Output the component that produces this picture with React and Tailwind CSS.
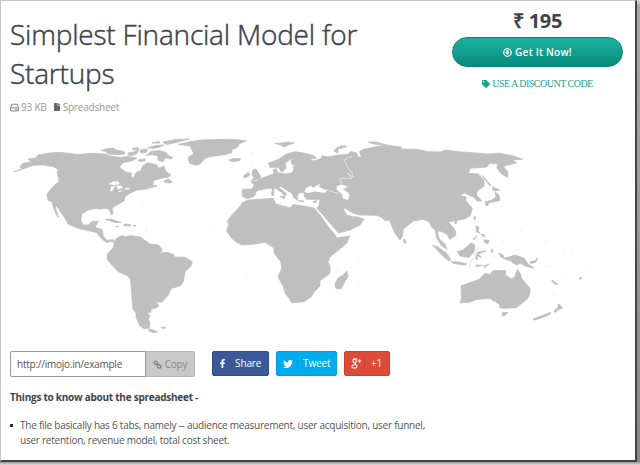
import React from "react";
import { FaFile, FaTag, FaTwitter, FaFacebookF } from "react-icons/fa";

const LAND = [
  // North America
  "M14 171.7L22 169L20 167L23 163L31 162L28 159L36 158L38 155L50 153L60 152.3L78 154.5L90 153.3L105 154L110 156L120 157.3L128 156.5L137 158.3L132 160.7L123 162.7L119.3 167.3L125 171.7L131.7 173.3L130.7 177.3L134 177.3L136 172.7L140.7 170.7L142.7 166L147.3 162.7L156.7 164.7L158.3 168.3L164 166.3L166 171.7L171 175L168 177.3L161 178.3L153 180.7L146 184L154 181.5L152 185L157 186L145 189.3L137 190L130 193.3L125 196.7L124.3 200.7L115 206L112 208.3L113.3 213.3L111.3 215L109.3 210L106.7 208.3L100 209L96 208.3L88.3 210L81.7 214L80.7 220L83.3 225L88.3 225L91.7 221.7L98.3 221L95 227.5L101.7 229.3L102.7 232L103.3 236.7L107.3 240.3L113.3 239.6L114 242L110 241.5L107 242.5L101.7 239L96.7 232.7L88.3 230.5L80 229L68.3 224.3L65 218.3L59.3 210L56.5 206L55 206.5L58.7 217.7L56 214L53.3 207L51.7 201.5L48.3 200.7L46.7 195L50 190L56 184L59 181.5L58.5 178L57 173L58.3 169.5L53.3 166.7L43.3 165L33.3 165.3L26.7 167.7Z",
  // Arctic islands
  "M101 150.5L106 149L113 148L116 150L124 151.5L125 154L118 154.5L108 154L106 151.5Z",
  "M128 153L134 152L139 149.5L137 153.5L132 155.5L128 155Z",
  "M132 148.5L138 147.5L139 149L134 150Z M140 150L148 149L146 152.5L141 153Z",
  "M148 147.5L156 145.5L164 145L160 147L153 148.5Z M163 142L176 139.5L189 139L176 142.5L166 144.5Z M152 143L159 141.5L160 143Z",
  "M146 155.5L151 151.5L160 150.5L166 152.5L169 156L173 157.5L171 159L165 157.5L163 162L158 160L158 156L152 154.5Z M138 160L145 159L145 161L139 161.5Z",
  // Newfoundland and Caribbean
  "M164 181L168 179L172 181.5L171 183L165 182.5Z M105 219.5L111 219L121 222.5L115 222.5L109 220.5Z M124 224L131 224.5L130 226L124 225.8Z M116 226L119 226.5L116 227Z M133 225.5L136 225.5L135 226.5Z",
  // Greenland, Iceland
  "M178.3 144.3L190 141.7L201 140L223.3 139.3L235 139.5L246.7 140.7L239 144L238 147L231.7 150L232 152.5L226 154.5L211 156.5L205 158.3L200 164L196 165.2L189.3 163.3L188.3 157L194 154L190 146Z M229 160L233 158.7L240.5 158.7L239 161L231 161.5Z",
  // South America
  "M114 242L117 238L123 235.3L124 237L130 235.8L140 236.7L146.7 241.7L150 244L158.3 245L161.7 248.5L161.7 251L159 255L163 252.5L168.3 252.7L174 254.7L174.5 257L185 257.3L192.3 261.7L191 266L185 271.7L183.3 281.7L180.7 285.7L171 288.5L168.3 295L161.7 302.3L155.7 301.7L159 306L155 308.5L150.7 309L151 312L147.3 312.7L150 316L148.3 319L150 323L149.3 328.3L144 328.5L140 326L136 317.3L136 313L132.7 308.3L130.7 280L128 276L118.3 271.7L112 265L107 259.3L107.5 254L113 248L114 244.5Z",
  "M149 329L153 330L157.5 332L153 332.5L149 331Z M161 327.5L166 327L164 329Z",
  // Europe and Asia
  "M242.3 189.5L252 189L254.3 185L251 181.7L257 181.3L261.7 178.3L268 176L274.3 173.5L273 170L276.5 168.5L277.5 172.7L286 174L292 172.5L294 169.5L293.3 166.5L302.3 165.7L292.3 165L291 160.7L295 158.3L291 159L285 163.3L286 168.3L281.7 172L278 167.3L270 167.3L268.3 163.3L278 159.5L286.7 154L295 151.7L305 153.3L315 156.3L316.5 158.5L309 158.5L314 161L321 158.3L322.3 155.7L328 157L338.3 155L348 154.5L350.5 151.5L356.7 153L358.3 157.3L361.7 156.7L359.3 151.7L363.3 149.3L373.3 147.3L386.7 145L401.7 147.3L400 149L416.7 149.3L428.3 151.7L440 152L445 150L461.7 152L473.3 152.7L486.7 154L500 153.3L513.3 156L522.7 159.3L511.7 160L516.7 162.7L508.3 165L503.3 166.5L507.7 171.7L507.7 177.5L501.7 174L497 168.3L497.3 163.5L490 163.3L486.7 167L470 168.3L468.3 173.3L478.3 174L484 180L484 186L477.3 191L476.5 195L481.7 200.7L477.3 201L473.3 197L468.3 195L465 192.8L459.3 195.3L466 197L466 201L472.3 208.3L470 216L464 219L455 220.7L448.3 221.7L455 230L456 235L450 239.3L446.7 234L440 231L437.3 231.7L439.3 239.3L444.5 243.5L447 249.3L441.7 246L436.7 238.3L435 229.5L431.7 227.3L429.3 222L423.3 219.3L413.3 221L403.3 229.3L402 237L400 240L395 233.3L389.3 220L385 220.7L381.7 217.3L376.7 215.3L360 215L353 213L345 208.3L343.3 209.3L346.7 215L353.3 216.7L358 217L364 219.3L360 225L350 230L338.3 233L333 226.5L316.7 208L319 206L320 199.3L306.7 199.3L304 196L304.5 192.5L299 193L297 196L297.5 200L294 198L292 193.5L281 186.5L278.5 187L286.7 194L285 196L282 192.5L274.5 188L267 188.5L257 190.5L254 196.5L247.5 198.7L242.3 196.5Z",
  // Britain, Ireland, Mediterranean islands
  "M253 170L256 169L258.5 173L261 177L259 179.5L251 180.5L254 178L252 174Z M244 175.5L248 172.5L250 174L247.5 177L243.5 177.5Z M272.5 188L274 187.5L273.5 195.5L271.5 195Z M280 196.5L285 196L284 199Z M298 200.5L304 201L303 202Z M313 201.5L317 200.5L315 203Z",
  // Russian Arctic islands
  "M275 143.5L281 143L288 142L294 143L288 145L284 147L281 145Z M334 151L337 147.5L343 146L347 146.5L338 149L338 153Z M368 142L376 142L386 145L374 144Z M340 146L345 146L342 147Z",
  // Africa
  "M236.7 210L241 205L241.7 203L248.3 200L258 199.3L273.3 198.3L275.7 204L290 207.8L293.3 204.5L303 206L314 208L320 215L328.3 226.7L335 235L337 238L350 235.7L346.7 243.3L330 257L328 262L330 266L330 273.3L320 280.7L320 286L314.3 291.7L311 297L304.3 301.7L291.7 302.7L289 298.3L285 293L283.3 286.7L278 276.7L281.7 268.3L281 262L274.3 253.3L274 248L270 245.5L265 242.3L255 244L241.7 245L236 242L231.7 238.3L226.5 231L228.5 225L227.5 221L231 216Z",
  "M346.7 271L348 276L341 289L335.7 288.3L335 284L337.7 278.3L343 275Z",
  // Japan, Sakhalin, Taiwan, Philippines
  "M482 175.5L484 177L491 185.5L490 186Z M492 187L500 190L495 191L493 190Z M495 192L499 195L500 200.5L493 202L487 203L485 202L492 200L496 197Z M485 203.5L489 203.5L487 206Z M474 217.5L475.5 216L475.5 219L474 220Z M476 226L479 227L478 231L480 233L476.5 232Z M481 234L485 235L483 237Z M484 240L489 240L488 244L484 242Z M473 239L477 236L474 240Z M454 222L457 221.5L456 224Z",
  // Sri Lanka, Indonesia, New Guinea
  "M403.5 239L406 241L405.5 243.5L403.5 242Z M432.5 245L438 247L446.7 253.3L451 260L449 261L443 256Z M451 261.5L459 262L467 264L464 265L454 263.5Z M457.5 251.5L463 250L471 243L475 245L474 252L469 257.5L460 256Z M478 252L486 251L478 254L482 258L478 256L477 260L475.5 258Z M476 265L483 265.5L476 266.5Z M484 266L489 264L484 268Z M499 253L503 255L504 258L509 257L515 255L524 258L528 264L534 268L525 266L520 263L517 265L513 263L511 261L505 259L501 257Z M530 262L537 260L537 258L536 262L531 263.5Z M491 250L493 249L492 253Z",
  // Australia, Tasmania, New Zealand
  "M461 286L470 282.5L479 279.5L485 273.3L490 274.5L492 271.5L495 270.5L506 270.7L505 275L511.7 279L515 276.7L517.3 269.3L520 273L522 279L530 288.3L530 293L528 298L521 304L516 307.7L507 308.3L500 308L499.5 304.5L496 302L498 300L494.5 301.5L490 298.3L476.7 299.5L470 302L460 303L461.5 298Z M502.5 312.5L508 312.5L504 316L502 315.5Z",
  "M533 319L541 316L549 313L551 312.5L549 315L537 319.5L534 320Z M554 311L558 307.5L558 304L560 305L562.5 308L558 310L555 312.5Z M552 280L558 284.5L556 284.5L552 281.5Z M579 278L582 277.5L580 279.5Z",
];

const LAKES = [
  // Great Lakes
  "M108.5 184L113 181.5L118 181.5L120 184L115 185L110 184.5Z M111 187L115 185.5L112.5 191L110 191.5Z M115.5 185.5L121 185.5L123 188L118 189.5L117 187Z M118 191L124 190L119 192.5Z M125 188L130 188L129 189.5L125 189.5Z",
  // Black Sea
  "M304.5 191.5L306 188L311 185.5L313 188L320 183.5L319 187L327 190.5L325 193L315 191.5L307 193Z",
  // Caspian Sea
  "M336.5 187L340 184.7L346 185.5L347 188L342.5 188.5L349.5 194L348.3 200L343 198.5L342 194L336.5 189.5Z",
];

const DOTS = [
  [143, 204], [117, 214], [114, 216], [146, 228], [147, 231], [213, 228], [252, 153.5], [252, 163],
  [537, 261], [540, 262.5], [543, 264], [546, 266], [550, 267], [561, 275], [585, 267], [573, 251],
  [564, 253], [546, 242], [503, 241.5], [521, 230], [554, 295], [359, 260], [358, 283], [361, 282],
  [338, 271], [247, 276], [494, 257], [480, 231], [482, 239], [486, 237],
];

function WorldMap() {
  return (
    <svg viewBox="10 130 612 208" className="block h-[208px] w-[612px] shrink-0">
      <path d={LAND.join(" ")} fill="#bfbfbf" stroke="#bfbfbf" strokeWidth="0.8" strokeLinejoin="round" />
      <path d={LAKES.join(" ")} fill="#fff" />
      <path d="M352.5 156L344.3 160L349 170L352 171.5L353 177L347 172.5L352 178.3L340 178.3L342 185M326.7 190L338.3 193.3" fill="none" stroke="#eee" strokeWidth="0.7" />
      <path d="M479 246L469 266" stroke="#ddd" strokeWidth="0.8" />
      {DOTS.map(([x, y], i) => (
        <circle key={i} cx={x} cy={y} r="0.6" fill="#d6d6d6" />
      ))}
    </svg>
  );
}

function DriveIcon() {
  return (
    <svg viewBox="0 0 9 9" className="mr-[2px] size-[9px]" fill="none" stroke="#888">
      <path d="M.6 4.6L2 1.200H7L8.400 4.600V7.900H.6ZM.6 4.800H8.400" strokeWidth="1" strokeLinejoin="round" />
      <path d="M5 6.400H7.400" strokeWidth=".9" />
    </svg>
  );
}

function ChainIcon() {
  return (
    <svg viewBox="0 0 9 9" className="size-[9px]" fill="none" stroke="#858585" strokeWidth="1.300">
      <rect x="-1.900" y="-1.400" width="3.800" height="2.800" rx="1.300" transform="translate(2.700 2.900) rotate(45)" />
      <rect x="-1.900" y="-1.400" width="3.800" height="2.800" rx="1.300" transform="translate(6.200 6.300) rotate(45)" />
      <path d="M3.600 3.800L5.400 5.500" />
    </svg>
  );
}

function DownloadIcon() {
  return (
    <svg viewBox="0 0 16 16" className="size-[9px]">
      <circle cx="8" cy="8" r="6.7" fill="none" stroke="#fff" strokeWidth="2.2" />
      <path d="M6.2 3.5h3.6v4h2.6L8 12.300 3.600 7.500h2.600z" fill="#fff" />
    </svg>
  );
}

function GooglePlusIcon() {
  return (
    <svg viewBox="0 0 12 12" className="h-[11px] w-[11px]" fill="none" stroke="#fff">
      <ellipse cx="3.9" cy="3.2" rx="1.7" ry="2.3" strokeWidth="1.2" transform="rotate(-15 3.9 3.2)" />
      <path d="M3.5 1H7M5.2 5C3 6.5 6.8 6.8 6.6 9C6.4 11.6 1 11.7 1 9.4C1 7.7 3.2 7.2 5 7.3" strokeWidth="1.1" />
      <path d="M9.3 1.3V5.3M7.3 3.3H11.3" strokeWidth="1.2" />
    </svg>
  );
}

export default function App() {
  return (
    <div className="h-[465px] w-[640px] overflow-hidden bg-[linear-gradient(to_bottom,#ddd_0,#aaa_6px,#888_461px,#aaa_463px,#ddd_465px)] font-['Open_Sans',sans-serif]">
      <div className="h-[462px] w-[637px] border-t border-r-2 border-b-2 border-l border-t-[#c6c6c6] border-r-[#444] border-b-[#444] border-l-[#c6c6c6] bg-white">
        <header className="flex h-[129px] pl-[9px]">
          <div className="w-[442px] pt-[14px]">
            <h1 className="w-[400px] text-[28px] leading-[39px] font-light tracking-[-0.2px] text-[#3c444c] [-webkit-text-stroke:0.45px_#3c444c]">
              Simplest Financial Model for Startups
            </h1>
            <div className="mt-[6px] flex h-4 items-center text-[10px] tracking-[-0.2px] text-[#999]">
              <DriveIcon />
              <span>93 KB</span>
              <FaFile className="mr-[2px] ml-[6px] size-[8px] text-[#666]" />
              <span>Spreadsheet</span>
            </div>
          </div>
          <div className="flex w-[171px] flex-col items-center pt-[5px]">
            <div className="flex gap-[5px] text-[20px] leading-[30px] font-bold tracking-[-0.3px] text-[#3c444c]">
              <span>₹</span>
              <span>195</span>
            </div>
            <button className="mt-[1px] flex h-[30px] w-full shrink-0 items-center justify-center gap-[3px] rounded-full border border-[#0b8074] bg-linear-to-b from-[#1bb3a1] to-[#078c7c] text-[10px] font-semibold tracking-[0.25px] text-white">
              <DownloadIcon />
              Get It Now!
            </button>
            <a className="mt-[10px] flex items-center gap-[2px] font-['Liberation_Serif',serif] text-[10px] leading-[14px] tracking-[-0.5px] text-[#16a394]">
              <FaTag className="size-2" />
              USE A DISCOUNT CODE
            </a>
          </div>
        </header>
        <div className="pl-[9px]">
          <WorldMap />
        </div>
        <div className="mt-[13px] flex h-[26px] pl-[9px] text-[10px] tracking-[-0.24px]">
          <div className="flex h-[26px] w-[136px] items-center rounded-l-[2px] border border-[#999] pl-[6px] text-[#555]">http://imojo.in/example</div>
          <button className="flex h-[26px] w-[49px] items-center justify-center gap-[3px] rounded-r-[2px] border border-l-0 border-[#b5b5b5] bg-[#c9c9c9] tracking-[-0.24px] text-[#8b8b8b]">
            <ChainIcon />
            Copy
          </button>
          <button className="ml-[17px] flex h-[25px] w-[57px] items-center rounded-[2px] border border-[#344e86] bg-[#3b5998] tracking-[-0.1px] text-white">
            <FaFacebookF className="ml-[5px] size-[9px]" />
            <span className="ml-2">Share</span>
          </button>
          <button className="ml-[7px] flex h-[25px] w-[61px] items-center rounded-[2px] border border-[#00a0e0] bg-[#00aced] tracking-[-0.1px] text-white">
            <FaTwitter className="ml-[6px] size-[10px]" />
            <span className="ml-[4px] h-[11px] w-px bg-[#009bd5]" />
            <span className="ml-[5px]">Tweet</span>
          </button>
          <button className="ml-[7px] flex h-[25px] w-[46px] items-center rounded-[2px] border border-[#c93f2d] bg-[#dd4b39] tracking-[-0.24px] text-white">
            <span className="ml-[6px]"><GooglePlusIcon /></span>
            <span className="ml-[2px] h-[11px] w-px bg-[#c74433]" />
            <span className="ml-[6px]">+1</span>
          </button>
        </div>
        <h2 className="mt-[13px] pl-[9px] text-[10px] leading-[15px] font-bold tracking-[-0.25px] text-[#3c444c]">Things to know about the spreadsheet -</h2>
        <div className="mt-[13px] flex pl-[9px] text-[10px] leading-[15px] tracking-[-0.24px] text-[#555]">
          <span className="mt-[6px] mr-[7px] size-[3px] shrink-0 bg-[#333]" />
          <p className="whitespace-nowrap">
            The file basically has 6 tabs, namely -- audience measurement, user acquisition, user funnel,
            <br />
            user retention, revenue model, total cost sheet.
          </p>
        </div>
      </div>
    </div>
  );
}
